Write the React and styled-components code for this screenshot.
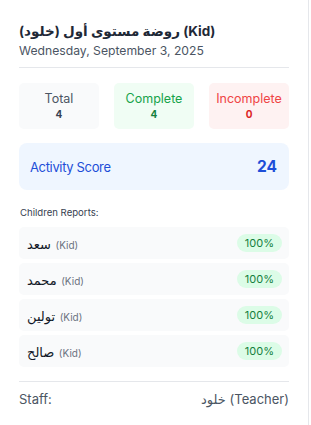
import React from "react";
import styled, { createGlobalStyle } from "styled-components";

const Global = createGlobalStyle`
  html, body { margin: 0; padding: 0; background: #ffffff; }
  body { font-family: Inter, "DejaVu Sans", "Noto Sans", sans-serif; }
  * { box-sizing: border-box; }
`;

const Card = styled.div`
  width: 309px;
  min-height: 425px;
  background: #ffffff;
  border-right: 1px solid #e5e7eb;
  padding: 21px 19px 0 19px;
`;

const Header = styled.div`
  padding-bottom: 6px;
  border-bottom: 1px solid #e5e7eb;
`;

const Title = styled.div`
  font-size: 13.5px;
  line-height: 20px;
  font-weight: 700;
  color: #1f2937;
`;

const DateLine = styled.div`
  font-size: 12.2px;
  line-height: 20px;
  color: #4b5563;
`;

const Stats = styled.div`
  margin-top: 15px;
  display: grid;
  grid-template-columns: repeat(3, 80px);
  column-gap: 15px;
`;

const palette = {
  gray: { bg: "#f9fafb", label: "#4b5563", num: "#374151" },
  green: { bg: "#f0fdf4", label: "#16a34a", num: "#15803d" },
  red: { bg: "#fef2f2", label: "#ef4444", num: "#dc2626" },
};

const StatBox = styled.div`
  background: ${(p) => palette[p.$tone].bg};
  border-radius: 5px;
  padding: 8px 0;
  text-align: center;
`;

const StatLabel = styled.div`
  font-size: 12.5px;
  line-height: 16px;
  color: ${(p) => palette[p.$tone].label};
`;

const StatNum = styled.div`
  font-size: 10px;
  line-height: 14px;
  font-weight: 700;
  color: ${(p) => palette[p.$tone].num};
`;

const Score = styled.div`
  margin-top: 14px;
  height: 47px;
  background: #eff6ff;
  border-radius: 8px;
  display: flex;
  align-items: center;
  justify-content: space-between;
  padding: 0 12px 0 11px;
`;

const ScoreLabel = styled.span`
  font-size: 13px;
  letter-spacing: -0.35px;
  color: #1d4ed8;
`;

const ScoreValue = styled.span`
  font-size: 15.5px;
  font-weight: 700;
  color: #1d4ed8;
`;

const SectionLabel = styled.div`
  margin-top: 16px;
  font-size: 9.6px;
  line-height: 14px;
  color: #374151;
  padding-left: 1px;
`;

const Rows = styled.div`
  margin-top: 7px;
  display: flex;
  flex-direction: column;
  gap: 4px;
`;

const Row = styled.div`
  height: 32px;
  background: #f9fafb;
  border-radius: 5px;
  display: flex;
  align-items: center;
  justify-content: space-between;
  padding: 0 7px 0 8px;
`;

const Name = styled.span`
  font-size: 13px;
  color: #111827;
`;

const Role = styled.span`
  font-size: 10px;
  color: #6b7280;
`;

const Badge = styled.span`
  height: 18px;
  padding: 0 8px;
  border-radius: 9px;
  background: #dcfce7;
  color: #15803d;
  font-size: 11px;
  display: inline-flex;
  align-items: center;
`;

const Footer = styled.div`
  margin-top: 14px;
  border-top: 1px solid #e5e7eb;
  padding-top: 8px;
  display: flex;
  justify-content: space-between;
  font-size: 13px;
  line-height: 18px;
  color: #4b5563;
`;

const kids = ["سعد", "محمد", "تولين", "صالح"];

export default function App() {
  return (
    <>
      <Global />
      <Card>
        <Header>
          <Title>روضة مستوى أول (خلود) (Kid)</Title>
          <DateLine>Wednesday, September 3, 2025</DateLine>
        </Header>
        <Stats>
          <StatBox $tone="gray">
            <StatLabel $tone="gray">Total</StatLabel>
            <StatNum $tone="gray">4</StatNum>
          </StatBox>
          <StatBox $tone="green">
            <StatLabel $tone="green">Complete</StatLabel>
            <StatNum $tone="green">4</StatNum>
          </StatBox>
          <StatBox $tone="red">
            <StatLabel $tone="red">Incomplete</StatLabel>
            <StatNum $tone="red">0</StatNum>
          </StatBox>
        </Stats>
        <Score>
          <ScoreLabel>Activity Score</ScoreLabel>
          <ScoreValue>24</ScoreValue>
        </Score>
        <SectionLabel>Children Reports:</SectionLabel>
        <Rows>
          {kids.map((k) => (
            <Row key={k}>
              <span>
                <Name>{k}</Name> <Role>(Kid)</Role>
              </span>
              <Badge>100%</Badge>
            </Row>
          ))}
        </Rows>
        <Footer>
          <span>Staff:</span>
          <span>خلود (Teacher)</span>
        </Footer>
      </Card>
    </>
  );
}
